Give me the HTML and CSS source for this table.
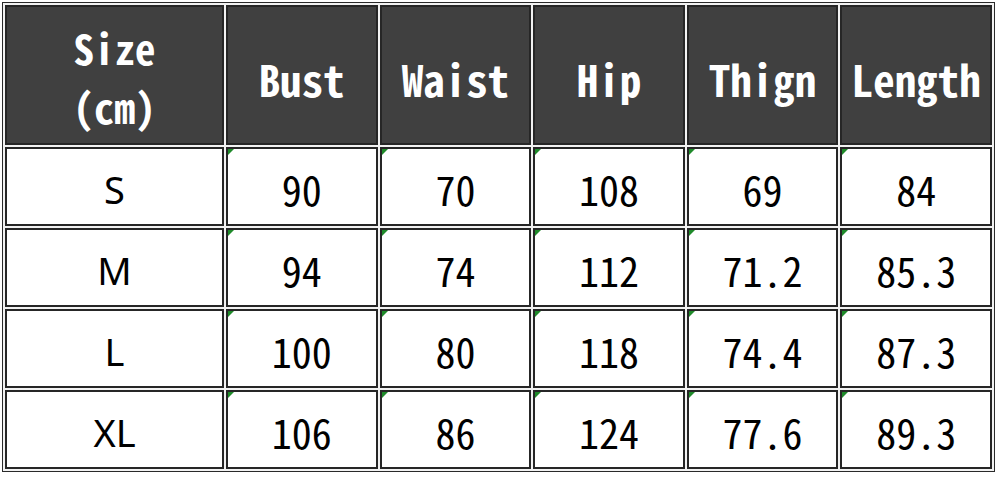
FILE: index.html
```html
<!DOCTYPE html>
<html>
<head>
<meta charset="utf-8">
<link rel="stylesheet" href="styles.css">
</head>
<body>
<table class="size-table">
  <colgroup>
    <col class="col-first">
    <col><col><col><col><col>
  </colgroup>
  <thead>
    <tr>
      <th class="head-size"><span class="line">Size</span><span class="line">(cm)</span></th>
      <th>Bust</th>
      <th>Waist</th>
      <th>Hip</th>
      <th>Thign</th>
      <th>Length</th>
    </tr>
  </thead>
  <tbody>
    <tr>
      <td class="label">S</td>
      <td class="flag">90</td><td class="flag">70</td><td class="flag">108</td><td class="flag">69</td><td class="flag">84</td>
    </tr>
    <tr>
      <td class="label">M</td>
      <td class="flag">94</td><td class="flag">74</td><td class="flag">112</td><td class="flag">71.2</td><td class="flag">85.3</td>
    </tr>
    <tr>
      <td class="label">L</td>
      <td class="flag">100</td><td class="flag">80</td><td class="flag">118</td><td class="flag">74.4</td><td class="flag">87.3</td>
    </tr>
    <tr>
      <td class="label">XL</td>
      <td class="flag">106</td><td class="flag">86</td><td class="flag">124</td><td class="flag">77.6</td><td class="flag">89.3</td>
    </tr>
  </tbody>
</table>
</body>
</html>
```
FILE: styles.css
```css
html, body {
  margin: 0;
  padding: 0;
  background: #ffffff;
}

body {
  padding: 2px 0 0 2px;
  font-family: "Noto Sans CJK JP", "Noto Sans", sans-serif;
}

.size-table {
  table-layout: fixed;
  width: 993px;
  border-collapse: separate;
  border-spacing: 2px;
  border: 1px solid #2a2a2a;
  background: #f2f2f2;
}

.col-first {
  width: 219px;
}

.size-table th,
.size-table td {
  box-sizing: border-box;
  border: 2px solid #262626;
  padding: 0;
  text-align: center;
  vertical-align: middle;
  font-feature-settings: "hwid";
}

.size-table th {
  height: 140px;
  background: #404040;
  color: #ffffff;
  font-weight: 700;
  font-size: 43px;
  line-height: 52px;
  padding-top: 6px;
}

.size-table th.head-size {
  padding-top: 4px;
  font-size: 41px;
  line-height: 59px;
}

.head-size .line {
  display: block;
  height: 59px;
}

.size-table td {
  height: 79px;
  background: #ffffff;
  color: #000000;
  font-size: 40px;
  font-weight: 400;
  line-height: 1;
  padding-top: 5px;
}

.size-table td.label {
  font-feature-settings: normal;
  font-family: "Noto Sans", "Open Sans", sans-serif;
  font-size: 38px;
}

.flag {
  position: relative;
}

.flag::before {
  content: "";
  position: absolute;
  top: 0;
  left: 0;
  width: 0;
  height: 0;
  border-top: 6px solid #1f8a2a;
  border-right: 6px solid transparent;
}
```
